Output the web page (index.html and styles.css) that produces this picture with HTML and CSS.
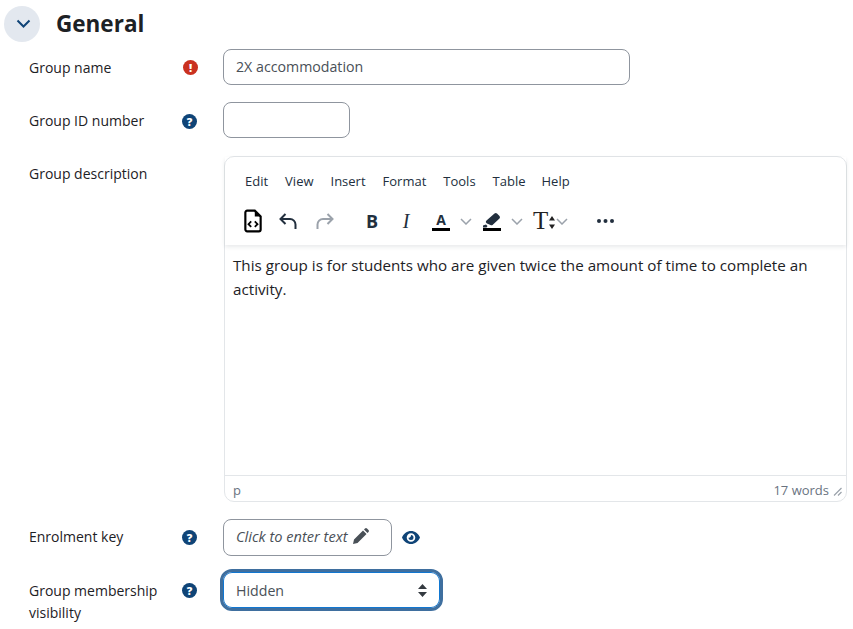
FILE: index.html
```html
<!DOCTYPE html>
<html lang="en">
<head>
<meta charset="utf-8">
<title>General</title>
<link rel="stylesheet" href="styles.css">
</head>
<body>
<div class="head">
  <span class="toggle"><svg width="15" height="10" viewBox="0 0 15 10"><path d="M1.500 1.500l6 6 6-6" fill="none" stroke="#0f4477" stroke-width="2"/></svg></span>
  <h2>General</h2>
</div>

<div class="row row-name">
  <div class="label"><span>Group name</span><span class="ic red">!</span></div>
  <div class="field"><div class="input wide">2X accommodation</div></div>
</div>
<div class="row row-id">
  <div class="label"><span>Group ID number</span><span class="ic">?</span></div>
  <div class="field"><div class="input short"></div></div>
</div>
<div class="row row-desc">
  <div class="label"><span>Group description</span></div>
  <div class="editor">
    <div class="top">
      <div class="menu"><span>Edit</span><span>View</span><span>Insert</span><span>Format</span><span>Tools</span><span>Table</span><span>Help</span></div>
      <div class="tools">
        <svg class="t-code" width="18" height="24" viewBox="0 0 20 26"><path d="M3.500 1.500h8.500l6.500 6.500v14.500a2 2 0 0 1-2 2h-13a2 2 0 0 1-2-2v-19a2 2 0 0 1 2-2z" fill="none" stroke="#000" stroke-width="2.400"/><path d="M12 1.500v6.500h6.500z" fill="#000"/><path d="M8 13.500l-3 3 3 3M12 13.500l3 3-3 3" fill="none" stroke="#000" stroke-width="2"/></svg>
        <svg class="t-undo" width="18" height="18" viewBox="0 0 18 18"><path d="M6.500 2l-5 5 5 5M2 7h9a5.500 5.500 0 0 1 5.500 5.500V17" fill="none" stroke="#222f3e" stroke-width="2"/></svg>
        <svg class="t-redo" width="18" height="18" viewBox="0 0 18 18"><path d="M11.500 2l5 5-5 5M16 7H7a5.500 5.500 0 0 0-5.500 5.500V17" fill="none" stroke="#9ba2ab" stroke-width="2"/></svg>
        <span class="t-b">B</span>
        <span class="t-i">I</span>
        <span class="t-a"><span class="a">A</span></span>
        <svg class="chev c1" width="12" height="7" viewBox="0 0 12 7"><path d="M1 1l5 5 5-5" fill="none" stroke="#9ba2ab" stroke-width="1.500"/></svg>
        <svg class="t-hl" width="18" height="19" viewBox="0 0 18 19"><path d="M0 13.500l3-1 1.500 1.500-1 1.500H0zM3.500 8.500l8-7a2 2 0 0 1 2.500 0l2.500 2.500a2 2 0 0 1 0 2.500l-7 6.500a2 2 0 0 1-2 0L4 11.500a2 2 0 0 1-.5-3z" fill="#222f3e"/><rect y="16" width="18" height="3" fill="#000"/></svg>
        <svg class="chev c2" width="12" height="7" viewBox="0 0 12 7"><path d="M1 1l5 5 5-5" fill="none" stroke="#9ba2ab" stroke-width="1.500"/></svg>
        <span class="t-t">T<svg width="6" height="13" viewBox="0 0 6 13"><path d="M3 0l3 4.500H0zM3 13l3-4.500H0z" fill="#222"/></svg></span>
        <svg class="chev c3" width="12" height="7" viewBox="0 0 12 7"><path d="M1 1l5 5 5-5" fill="none" stroke="#9ba2ab" stroke-width="1.500"/></svg>
        <svg class="t-more" width="17" height="4" viewBox="0 0 17 4"><circle cx="2" cy="2" r="2" fill="#222f3e"/><circle cx="8.500" cy="2" r="2" fill="#222f3e"/><circle cx="15" cy="2" r="2" fill="#222f3e"/></svg>
      </div>
    </div>
    <div class="body">This group is for students who are given twice the amount of time to complete an activity.</div>
    <div class="status"><span>p</span><span class="words">17 words<svg width="9" height="9" viewBox="0 0 9 9"><path d="M8.500 1L1 8.500M8.500 5L5 8.500" fill="none" stroke="#9ba2ab" stroke-width="1.200"/></svg></span></div>
  </div>
</div>
<div class="row row-key">
  <div class="label"><span>Enrolment key</span><span class="ic">?</span></div>
  <div class="field keyf">
    <div class="input key"><em>Click to enter text</em><svg width="16" height="16" viewBox="0 0 16 16"><path d="M0 16l1-4.500 9-9 3.500 3.500-9 9zM11 1.500l1-1a1.500 1.500 0 0 1 2 0l1.500 1.500a1.500 1.500 0 0 1 0 2l-1 1z" fill="#495057"/></svg></div>
    <svg class="eye" width="18" height="13" viewBox="0 0 18 13"><path fill-rule="evenodd" d="M9 0c4 0 7.300 2.600 9 6.500C16.300 10.400 13 13 9 13s-7.300-2.600-9-6.500C1.700 2.600 5 0 9 0zm0 2.200a4.300 4.300 0 1 0 0 8.600 4.300 4.300 0 0 0 0-8.600z" fill="#0f4477"/><path d="M9 4a2.500 2.500 0 1 1-2.500 2.500c.8.500 2.500 0 2.500-2.500z" fill="#0f4477"/></svg>
  </div>
</div>
<div class="row row-vis">
  <div class="label"><span class="two">Group membership visibility</span><span class="ic">?</span></div>
  <div class="field">
    <div class="select"><span>Hidden</span><svg width="9" height="13" viewBox="0 0 9 13"><path d="M4.500 0L9 5H0zM4.500 13L0 8h9z" fill="#343a40"/></svg></div>
  </div>
</div>
</body>
</html>
```
FILE: styles.css
```css
* { box-sizing: border-box; }
html, body { margin: 0; padding: 0; background: #fff; overflow: hidden; }
body {
  width: 853px;
  height: 629px;
  font-family: "Open Sans", "Noto Sans", sans-serif;
  font-size: 14.200px;
  color: #1d2125;
  line-height: 22px;
}
.head { display: flex; align-items: center; height: 37px; margin: 5px 0 0 4px; }
.toggle {
  width: 36px; height: 36px; border-radius: 50%; background: #e3e8ef; padding-left: 2px;
  display: flex; align-items: center; justify-content: center; flex: none;
}
h2 { margin: 0 0 0 16px; font-size: 22.500px; font-weight: 700; line-height: 36px; }

.row { display: flex; padding-left: 29px; }
.label { width: 194px; flex: none; display: flex; justify-content: space-between; align-items: flex-start; padding-right: 26px; font-size: 14px; }
.label .two { width: 135px; }
.ic {
  width: 15px; height: 15px; border-radius: 50%; background: #0f4477; color: #fff;
  font-size: 11px; font-weight: 800; line-height: 15px; text-align: center; flex: none; margin-top: 4px;
}
.ic.red { background: #ca3120; margin: 3px -1px 0 0; }

.input { border: 1px solid #8f959e; border-radius: 8px; background: #fff; height: 36px; padding: 6px 12px; color: #495057; }
.wide { width: 407px; }
.short { width: 127px; }

.row-name { margin-top: 7px; }
.row-name .label { padding-top: 8px; }
.row-id { margin-top: 17px; }
.row-id .label { padding-top: 8px; }
.row-desc { margin-top: 18px; }
.row-desc .label { padding-top: 7px; }

.editor { width: 623px; height: 346px; margin-left: 1px; border: 1px solid #e3e6e9; border-radius: 10px; display: flex; flex-direction: column; }
.top { height: 88px; box-shadow: 0 2px 4px rgba(34,47,62,.1); flex: none; }
.menu { display: flex; padding: 13px 0 0 20px; font-size: 13px; color: #222f3e; line-height: 22px; }
.menu span:nth-child(1) { margin-right: 17px; }
.menu span:nth-child(2) { margin-right: 17px; }
.menu span:nth-child(3) { margin-right: 17px; }
.menu span:nth-child(4) { margin-right: 17px; }
.menu span:nth-child(5) { margin-right: 17px; }
.menu span:nth-child(6) { margin-right: 16px; }
.tools { display: flex; align-items: center; height: 40px; margin-top: 9px; padding-left: 19px; }
.t-undo { margin-left: 17px; }
.t-redo { margin-left: 19px; }
.t-b { margin-left: 30px; width: 16px; font-weight: 700; font-size: 18px; color: #222f3e; text-align: center; }
.t-i { margin-left: 20px; width: 12px; font-family: "Liberation Serif", serif; font-style: italic; font-size: 20px; color: #222f3e; text-align: center; }
.t-a { margin-left: 20px; width: 18px; height: 20px; border-bottom: 3px solid #000; display: flex; justify-content: center; }
.a { font-size: 14px; font-weight: 700; line-height: 17px; color: #222f3e; }
.c1 { margin-left: 10px; }
.c2 { margin-left: 10px; }
.c3 { margin-left: 0; }
.t-hl { margin-left: 11px; }
.t-t { margin-left: 10px; width: 23px; font-family: "Liberation Serif", serif; font-size: 25px; color: #222; display: flex; align-items: center; line-height: 24px; }
.t-t svg { margin-left: 1px; margin-top: 3px; }
.t-more { margin-left: 29px; }

.body { flex: 1; padding: 8px 8px; font-size: 15.200px; line-height: 24px; color: #1d2125; }
.status {
  height: 26px; border-top: 1px solid #e3e6e9; display: flex; justify-content: space-between; align-items: center;
  padding: 3px 4px 0 8px; font-size: 13px; color: #6a737f; flex: none;
}
.words { display: flex; align-items: center; gap: 4px; }
.words svg { margin-top: 3px; }

.row-key { margin-top: 17px; }
.row-key .label { padding-top: 7px; }
.keyf { display: flex; align-items: center; }
.key { width: 169px; height: 37px; display: flex; align-items: center; gap: 5px; padding: 4px 12px 8px; }
.key em { white-space: nowrap; font-size: 14.600px; }
.eye { margin-left: 10px; margin-top: -1px; }

.row-vis { margin-top: 15px; }
.row-vis .label { padding-top: 9px; }
.row-vis .ic { margin-top: 3px; }
.select {
  width: 223px; height: 42px; margin: -2px 0 0 -3px; border: 3px solid #3f6f9f; border-radius: 12px;
  box-shadow: 0 0 0 1px #1177d1 inset; display: flex; align-items: center; justify-content: space-between;
  padding: 1px 13px 0 13px; color: #495057;
}
```
